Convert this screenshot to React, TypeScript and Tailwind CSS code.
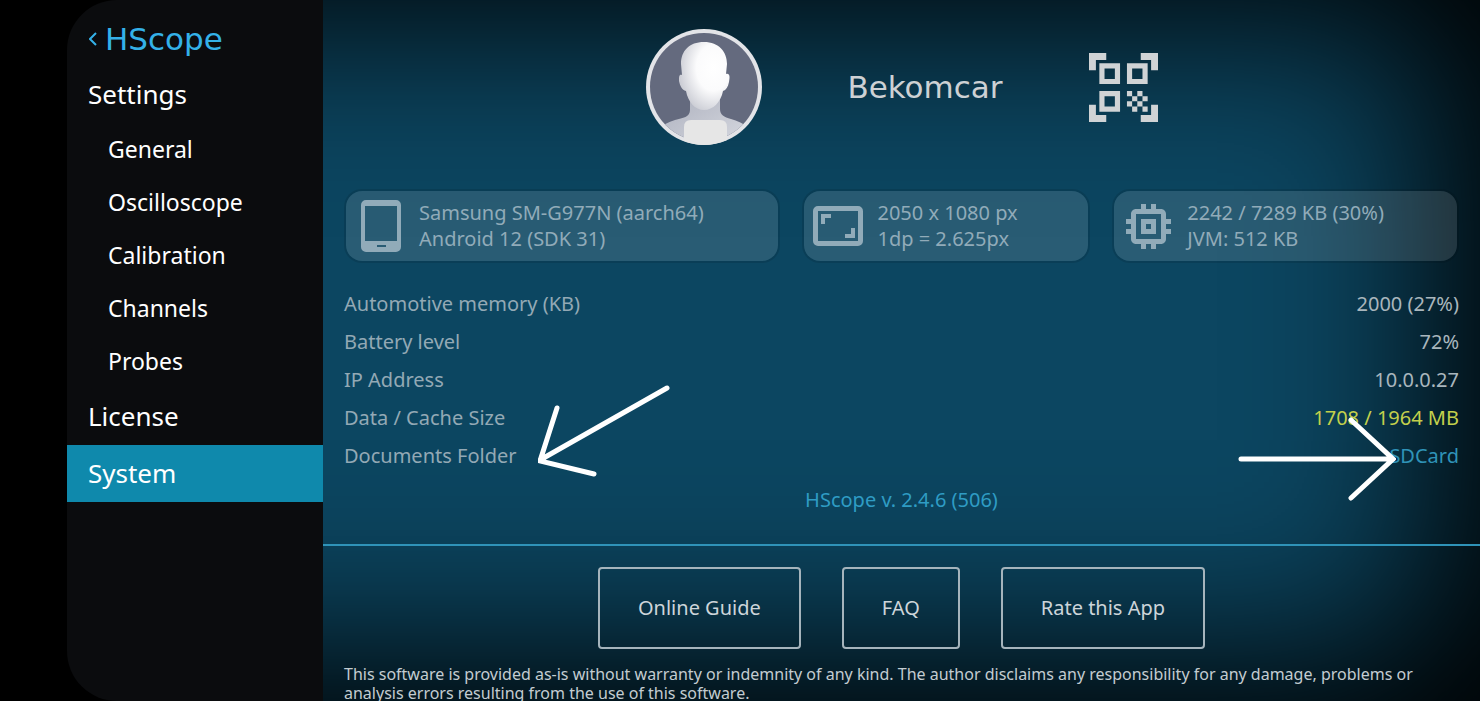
import type { ReactNode } from 'react'
import { clsx } from 'clsx'

const menu = [
  { label: 'General' },
  { label: 'Oscilloscope' },
  { label: 'Calibration' },
  { label: 'Channels' },
  { label: 'Probes' },
]

const rows = [
  { label: 'Automotive memory (KB)', value: '2000 (27%)', color: 'text-[#a9b6bd]' },
  { label: 'Battery level', value: '72%', color: 'text-[#a9b6bd]' },
  { label: 'IP Address', value: '10.0.0.27', color: 'text-[#a9b6bd]' },
  { label: 'Data / Cache Size', value: '1708 / 1964 MB', color: 'text-[#c3d04c]' },
  { label: 'Documents Folder', value: 'SDCard', color: 'text-[#2f93b8]' },
]

const links = ['Online Guide', 'FAQ', 'Rate this App']

function Avatar() {
  return (
    <svg viewBox="0 0 118 118" className="size-[118px]" role="img" aria-label="Profile picture">
      <defs>
        <clipPath id="face-clip">
          <circle cx="59" cy="59" r="54" />
        </clipPath>
        <radialGradient id="head" cx="0.68" cy="0.38" r="0.75">
          <stop offset="0" stopColor="#ffffff" />
          <stop offset="0.45" stopColor="#fbfbfc" />
          <stop offset="1" stopColor="#c3c5ce" />
        </radialGradient>
        <linearGradient id="neck" x1="0" y1="0" x2="1" y2="1">
          <stop offset="0" stopColor="#a9adbb" />
          <stop offset="1" stopColor="#d8dae1" />
        </linearGradient>
      </defs>
      <circle cx="59" cy="59" r="58" fill="#e3e4e8" />
      <circle cx="59" cy="59" r="54" fill="#646a7e" />
      <g clipPath="url(#face-clip)">
        <path d="M45 60 V82 C45 89 38 90 30 92 C23 94 18 97 14 101 V118 H104 V101 C99 95 92 93 86 91 C79 89 75 87 75 81 V60 Z" fill="url(#neck)" />
      </g>
      <path d="M59 14 C74 14 82 24 82 36 L81 46 C85 45 85 49 84 54 C83 59 81 62 78 63 C76 74 68 82 59 82 C50 82 43 74 41 63 C37 62 35 58 34 53 C34 49 34 46 37 47 L36 36 C36 23 44 14 59 14 Z" fill="url(#head)" />
      <path d="M39 99 Q39 92 46 92 H75 Q82 92 82 99 V112 Q70 117 59 117 Q49 117 39 113 Z" fill="#e6e6e6" />
    </svg>
  )
}

function QrIcon() {
  return (
    <svg viewBox="0 0 40 40" className="size-[69px]" fill="#d0d3d5" aria-hidden="true">
      <path d="M0 0h10v4H4v6H0zM30 0h10v10h-4V4h-6zM0 30h4v6h6v4H0zM36 30h4v10H30v-4h6z" />
      <path
        fillRule="evenodd"
        d="M6 6h12v12H6zM9 9v6h6V9zM22 6h12v12H22zM25 9v6h6V9zM6 22h12v12H6zM9 25v6h6v-6z"
      />
      <path d="M22 22h3v3h-3zM28 22h3v3h-3zM25 25h3v3h-3zM31 25h3v3h-3zM22 28h3v3h-3zM28 28h3v3h-3zM25 31h3v3h-3zM31 31h3v3h-3z" />
    </svg>
  )
}

function TabletIcon() {
  return (
    <svg viewBox="0 0 40 52" className="h-[52px] w-10" fill="#91abb9" aria-hidden="true">
      <path
        fillRule="evenodd"
        d="M5 0h30a5 5 0 0 1 5 5v42a5 5 0 0 1-5 5H5a5 5 0 0 1-5-5V5a5 5 0 0 1 5-5zM4 6v35h32V6zM16 45v2h9v-2z"
      />
    </svg>
  )
}

function ScreenIcon() {
  return (
    <svg viewBox="0 0 50 40" className="h-10 w-[50px]" fill="#91abb9" aria-hidden="true">
      <path
        fillRule="evenodd"
        d="M5 0h40a5 5 0 0 1 5 5v30a5 5 0 0 1-5 5H5a5 5 0 0 1-5-5V5a5 5 0 0 1 5-5zM5 5v30h40V5z"
      />
      <path d="M8 8h10v4h-6v6H8zM38 22h4v10H32v-4h6z" />
    </svg>
  )
}

function ChipIcon() {
  return (
    <svg viewBox="0 0 18 18" className="size-[45px]" fill="#91abb9" aria-hidden="true">
      <path d="M12 6H6v6h6V6zm-2 4H8V8h2v2zm8-2V6h-2V4c0-1.100-.9-2-2-2h-2V0h-2v2H8V0H6v2H4c-1.100 0-2 .9-2 2v2H0v2h2v2H0v2h2v2c0 1.100.9 2 2 2h2v2h2v-2h2v2h2v-2h2c1.100 0 2-.9 2-2v-2h2v-2h-2V8h2zm-4 6H4V4h10v10z" />
    </svg>
  )
}

interface InfoCardProps {
  icon: ReactNode
  lines: string[]
  className: string
}

function InfoCard({ icon, lines, className }: InfoCardProps) {
  return (
    <div
      className={clsx(
        'flex h-[70px] items-center rounded-2xl bg-white/12 text-xl leading-[26px] whitespace-nowrap text-[#91abb9] ring-2 ring-black/10',
        className,
      )}
    >
      {icon}
      <div>
        {lines.map((line) => (
          <p key={line}>{line}</p>
        ))}
      </div>
    </div>
  )
}

function Sidebar() {
  return (
    <nav className="w-64 shrink-0 overflow-hidden rounded-l-[50px] bg-[#0b0c0e] text-white">
      <a href="#home" className="flex h-[66px] items-center gap-2 pt-3 pl-[22px] text-[#34b1e8]">
        <svg viewBox="0 0 8 14" className="h-3.5 w-2" fill="none" stroke="currentColor" strokeWidth="2" aria-hidden="true">
          <path d="M7 1 1 7l6 6" />
        </svg>
        <span className="font-['DejaVu_Sans'] text-[31px]">HScope</span>
      </a>
      <a href="#settings" className="flex h-[57px] items-center pl-[21px] text-[26px]">Settings</a>
      {menu.map((item) => (
        <a key={item.label} href={`#${item.label}`} className="flex h-[53px] items-center pl-[41px] text-[23px]">
          {item.label}
        </a>
      ))}
      <a href="#license" className="flex h-[57px] items-center pl-[21px] text-[26px]">License</a>
      <a href="#system" aria-current="page" className="flex h-[57px] items-center bg-[#0f89ac] pl-[21px] text-[26px]">
        System
      </a>
    </nav>
  )
}

export default function App() {
  return (
    <div className="flex h-screen overflow-hidden bg-black pl-[67px] font-['Noto_Sans',sans-serif]">
      <Sidebar />
      <main className="relative isolate min-w-0 flex-1 overflow-hidden bg-[#0c4661]">
        {/* Edge vignette, the left side is pushed out of view */}
        <div className="absolute inset-y-0 right-0 -left-80 -z-10 shadow-[inset_-14px_-12px_180px_34px_#000]" />

        <header className="flex h-[174px] items-center justify-center">
          <Avatar />
          <h1 className="mr-[86px] ml-[84px] font-['DejaVu_Sans'] text-[31px] text-[#cdd1d4]">Bekomcar</h1>
          <button type="button" aria-label="Show QR code">
            <QrIcon />
          </button>
        </header>

        <section className="flex gap-[26px] pt-[17px] pr-[23px] pl-[23px]">
          <InfoCard
            icon={<TabletIcon />}
            lines={['Samsung SM-G977N (aarch64)', 'Android 12 (SDK 31)']}
            className="flex-[433] gap-[18px] pl-[15px]"
          />
          <InfoCard
            icon={<ScreenIcon />}
            lines={['2050 x 1080 px', '1dp = 2.625px']}
            className="flex-[285] gap-3.5 pl-[9px]"
          />
          <InfoCard
            icon={<ChipIcon />}
            lines={['2242 / 7289 KB (30%)', 'JVM: 512 KB']}
            className="flex-[343] gap-4 pl-3"
          />
        </section>

        <dl className="px-[21px] pt-6 text-xl">
          {rows.map((row) => (
            <div key={row.label} className="flex h-[38px] items-center justify-between">
              <dt className="text-[#93a9b5]">{row.label}</dt>
              <dd className={row.color}>{row.value}</dd>
            </div>
          ))}
        </dl>
        <p className="flex h-[69px] items-start justify-center pt-[11px] text-xl leading-7 text-[#2f9cc4]">
          HScope v. 2.4.6 (506)
        </p>

        <div className="flex justify-center gap-[41px] border-t-2 border-[#2f93b8] pt-[21px] text-xl text-[#cdd5da]">
          {links.map((label) => (
            <button key={label} type="button" className="h-[82px] rounded border-2 border-[#a5b4bc] px-[38px]">
              {label}
            </button>
          ))}
        </div>
        <p className="px-[21px] pt-4 text-base leading-[19px] text-[#c3ccd1]">
          This software is provided as-is without warranty or indemnity of any kind. The author disclaims any
          responsibility for any damage, problems or analysis errors resulting from the use of this software.
        </p>

        {/* Hand-drawn pointers over the Documents Folder row */}
        <svg viewBox="0 0 132 92" className="absolute top-[385px] left-[215px] h-[92px] w-[132px]" fill="none" stroke="#fff" strokeWidth="5" strokeLinecap="round" aria-hidden="true">
          <path d="M129 3 2 75M19 23 2 76l54 13" />
        </svg>
        <svg viewBox="0 0 158 84" className="absolute top-[417px] right-[84px] h-[84px] w-[158px]" fill="none" stroke="#fff" strokeWidth="5" strokeLinecap="round" aria-hidden="true">
          <path d="M3 42h152M113 3l42 39-42 39" />
        </svg>
      </main>
    </div>
  )
}
